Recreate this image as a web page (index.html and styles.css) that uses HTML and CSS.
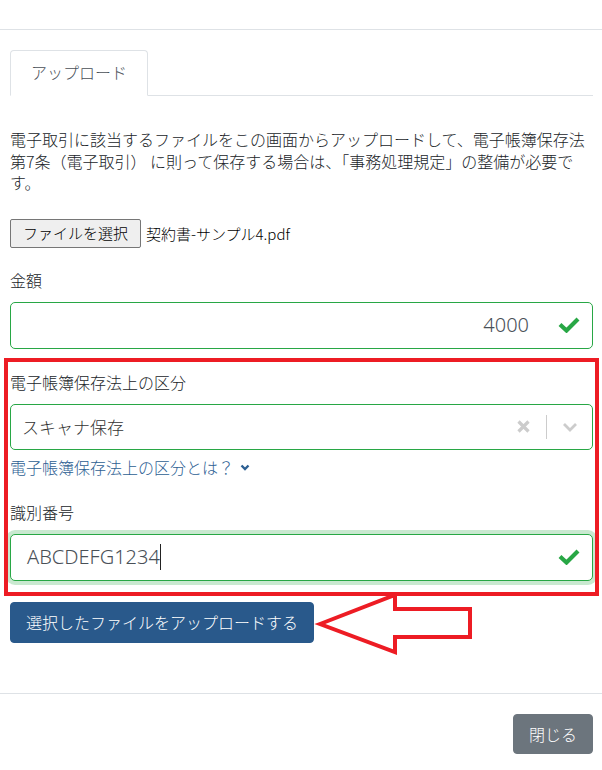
FILE: index.html
```html
<!DOCTYPE html>
<html lang="ja">
<head>
<meta charset="utf-8">
<title>アップロード</title>
<link rel="stylesheet" href="styles.css">
</head>
<body>
<div class="page">
  <div class="modal-header"></div>
  <div class="modal-body">
    <ul class="tabs">
      <li class="tab active">アップロード</li>
    </ul>
    <p class="desc">電子取引に該当するファイルをこの画面からアップロードして、電子帳簿保存法第7条（電子取引） に則って保存する場合は、「事務処理規定」の整備が必要です。</p>
    <div class="file-row">
      <span class="file-btn">ファイルを選択</span>
      <span class="file-name">契約書-サンプル4.pdf</span>
    </div>
    <div class="group amount">
      <label class="label">金額</label>
      <div class="control valid align-right">
        <span class="value">4000</span>
        <svg class="check" width="22" height="16" viewBox="0 0 22 16"><polyline points="2,7.5 8.5,13.5 20,2" fill="none" stroke="#28a745" stroke-width="4.2"/></svg>
      </div>
    </div>
    <div class="highlight">
      <div class="group">
        <label class="label">電子帳簿保存法上の区分</label>
        <div class="select">
          <span class="select-value">スキャナ保存</span>
          <span class="indicators">
            <svg class="clear" width="13" height="13" viewBox="0 0 13 13"><path d="M1.5 1.5 L11.5 11.5 M11.5 1.5 L1.5 11.5" stroke="#cccccc" stroke-width="3.2" fill="none"/></svg>
            <span class="sep"></span>
            <svg class="drop" width="16" height="10" viewBox="0 0 16 10"><polyline points="2,2 8,8 14,2" fill="none" stroke="#cccccc" stroke-width="2.8"/></svg>
          </span>
        </div>
        <a class="help-link" href="#">電子帳簿保存法上の区分とは？<svg class="chev" width="10" height="8" viewBox="0 0 10 8"><polyline points="1.5,1.5 5,5 8.5,1.5" fill="none" stroke="#2d6093" stroke-width="2.4"/></svg></a>
      </div>
      <div class="group id-group">
        <label class="label">識別番号</label>
        <div class="control valid focused">
          <span class="value">ABCDEFG1234</span><span class="caret"></span>
          <svg class="check" width="22" height="16" viewBox="0 0 22 16"><polyline points="2,7.5 8.5,13.5 20,2" fill="none" stroke="#28a745" stroke-width="4.2"/></svg>
        </div>
      </div>
    </div>
    <button class="btn-primary" type="button">選択したファイルをアップロードする</button>
  </div>
  <div class="modal-footer">
    <button class="btn-secondary" type="button">閉じる</button>
  </div>
  <div class="annot-box"></div>
  <svg class="annot-arrow" width="602" height="770" viewBox="0 0 602 770">
    <polygon points="320,624 395,595 395,609 470,609 470,637 395,637 395,652" fill="none" stroke="#ed1c24" stroke-width="4" stroke-linejoin="miter"/>
  </svg>
</div>
</body>
</html>
```
FILE: styles.css
```css
* { box-sizing: border-box; }
html, body { margin: 0; padding: 0; background: #fff; }
body {
  font-family: "Noto Sans", "Noto Sans CJK JP", sans-serif;
  font-size: 16px;
  font-weight: 300;
  color: #212529;
}
.page { position: relative; width: 602px; height: 770px; overflow: hidden; }
.modal-header { height: 30px; border-bottom: 1px solid #dee2e6; }
.modal-body { padding: 20px 9px 50px 10px; }
.tabs {
  list-style: none; margin: 0; padding: 0;
  display: flex; border-bottom: 1px solid #dee2e6;
}
.tab {
  height: 46px; margin-bottom: -1px;
  padding: 0 20px; display: flex; align-items: center;
  border: 1px solid #dee2e6; border-bottom-color: #fff;
  border-radius: 4px 4px 0 0; color: #495057;
  font-family: "Noto Sans CJK JP", sans-serif; line-height: 1;
  padding-bottom: 2px;
}
.desc {
  margin: 33px 0 0; line-height: 21.5px;
  font-family: "Noto Sans CJK JP", sans-serif;
}
.file-row { display: flex; align-items: center; margin-top: 25px; height: 29px; }
.file-btn {
  font-family: "Noto Sans CJK JP", sans-serif; font-size: 15px;
  height: 29px; line-height: 25px; padding: 0 12px;
  background: #efefef; border: 1px solid #767676; border-radius: 2px;
  color: #000;
}
.file-name { margin-left: 5px; font-size: 15px; color: #000; font-family: "Noto Sans CJK JP", sans-serif; }
.group { display: flex; flex-direction: column; }
.amount { margin-top: 20px; }
.label { line-height: 24px; margin-bottom: 10px; font-family: "Noto Sans CJK JP", sans-serif; }
.control {
  position: relative; height: 47px; border: 1px solid #28a745; border-radius: 5px;
  display: flex; align-items: center; padding: 0 16px;
  font-size: 20px; color: #495057; background: #fff;
}
.control.align-right { justify-content: flex-end; padding-right: 63px; }
.control .value { line-height: 1; }
.control .check { position: absolute; right: 12px; top: 14px; }
.control.focused { box-shadow: 0 0 0 4px rgba(40,167,69,.25); }
.caret { display: inline-block; width: 1px; height: 26px; background: #222; margin-left: 0; }
.highlight { position: relative; margin-top: 8px; padding-top: 13px; padding-bottom: 15px; }
.select {
  height: 46px; border: 1px solid #28a745; border-radius: 5px;
  display: flex; align-items: center; justify-content: space-between;
  padding-left: 11px;
}
.select-value { font-size: 17px; color: #333; font-family: "Noto Sans CJK JP", sans-serif; line-height: 1; }
.indicators { display: flex; align-items: center; height: 100%; padding-right: 14px; }
.clear { margin-right: 16px; }
.sep { width: 1px; height: 24px; background: #cccccc; margin-right: 15px; }
.help-link {
  margin-top: 5px; line-height: 24px; color: #2d6093; text-decoration: none;
  font-family: "Noto Sans CJK JP", sans-serif;
  display: inline-flex; align-items: center; align-self: flex-start;
}
.chev { margin-left: 6px; margin-top: 2px; }
.id-group { margin-top: 21px; }
.btn-primary {
  margin-top: 6px; height: 41px; padding: 0 15px;
  background: #29598b; color: #fff; border: 1px solid #29598b; border-radius: 4px;
  font-family: "Noto Sans CJK JP", sans-serif; font-size: 16px; font-weight: 300;
}
.modal-footer {
  border-top: 1px solid #dee2e6; display: flex; justify-content: flex-end;
  padding: 20px 9px 0 0;
}
.btn-secondary {
  height: 40px; padding: 0 15px; background: #6c757d; color: #fff;
  border: 1px solid #6c757d; border-radius: 4px;
  font-family: "Noto Sans CJK JP", sans-serif; font-size: 16px; font-weight: 300;
}
.annot-box {
  position: absolute; left: 4px; top: 358px; width: 595px; height: 238px;
  border: 4px solid #ed1c24; pointer-events: none;
}
.annot-arrow { position: absolute; left: 0; top: 0; pointer-events: none; }
```
